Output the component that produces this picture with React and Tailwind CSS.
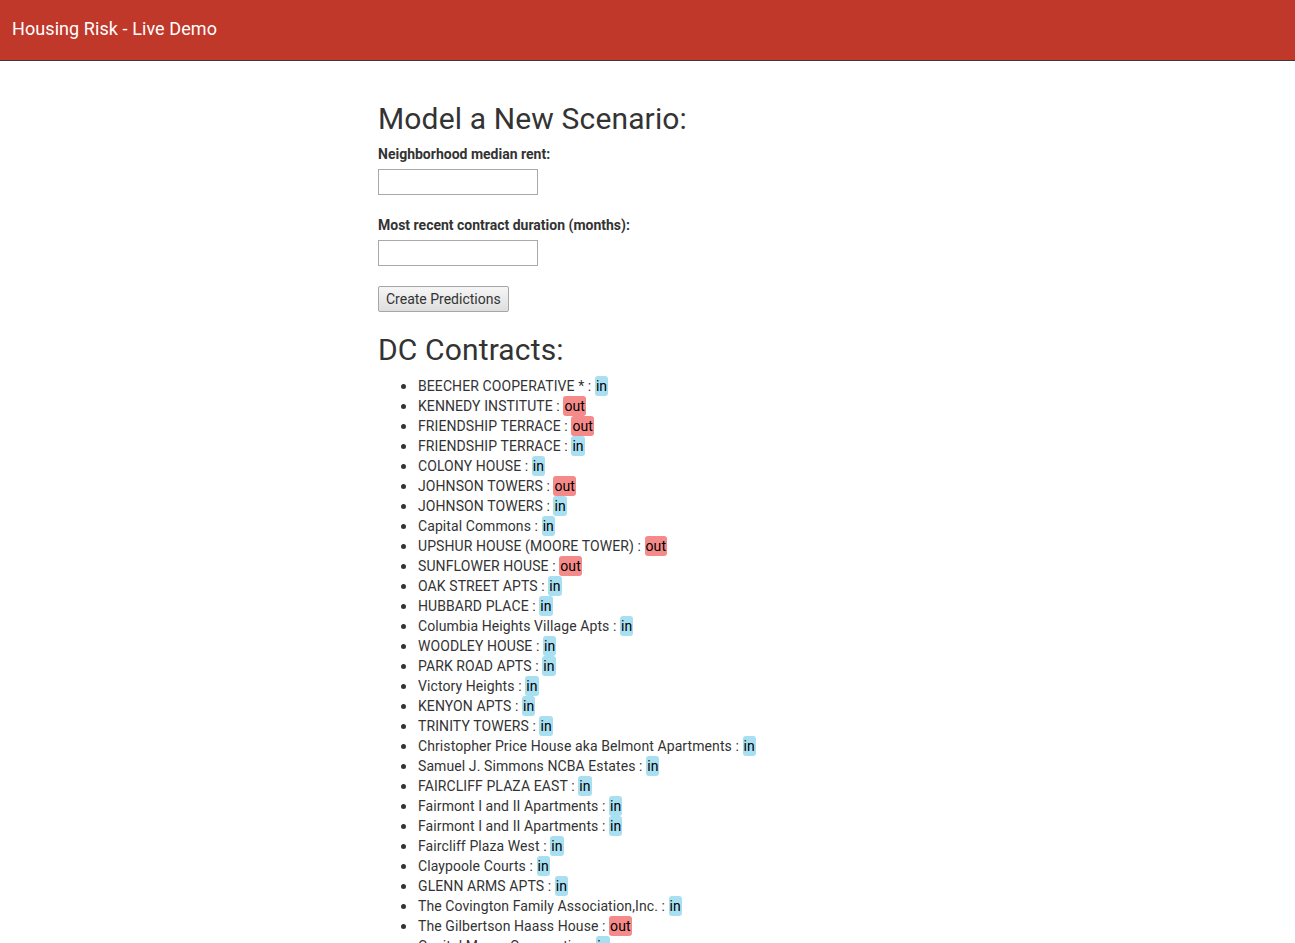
import React from "react";

const items = [
  ["BEECHER COOPERATIVE *", "in"],
  ["KENNEDY INSTITUTE", "out"],
  ["FRIENDSHIP TERRACE", "out"],
  ["FRIENDSHIP TERRACE", "in"],
  ["COLONY HOUSE", "in"],
  ["JOHNSON TOWERS", "out"],
  ["JOHNSON TOWERS", "in"],
  ["Capital Commons", "in"],
  ["UPSHUR HOUSE (MOORE TOWER)", "out"],
  ["SUNFLOWER HOUSE", "out"],
  ["OAK STREET APTS", "in"],
  ["HUBBARD PLACE", "in"],
  ["Columbia Heights Village Apts", "in"],
  ["WOODLEY HOUSE", "in"],
  ["PARK ROAD APTS", "in"],
  ["Victory Heights", "in"],
  ["KENYON APTS", "in"],
  ["TRINITY TOWERS", "in"],
  ["Christopher Price House aka Belmont Apartments", "in"],
  ["Samuel J. Simmons NCBA Estates", "in"],
  ["FAIRCLIFF PLAZA EAST", "in"],
  ["Fairmont I and II Apartments", "in"],
  ["Fairmont I and II Apartments", "in"],
  ["Faircliff Plaza West", "in"],
  ["Claypoole Courts", "in"],
  ["GLENN ARMS APTS", "in"],
  ["The Covington Family Association,Inc.", "in"],
  ["The Gilbertson Haass House", "out"],
  ["Capital Manor Cooperative", "in"],
  ["GARFIELD HILLS", "in"],
  ["PARKSIDE TERRACE", "in"],
];

function Badge({ v }) {
  return (
    <span
      className={
        "inline-block rounded-[3px] px-[1px] text-black leading-[20px] " +
        (v === "out" ? "bg-[#f58a8a]" : "bg-[#a8dff1]")
      }
    >
      {v}
    </span>
  );
}

export default function App() {
  return (
    <div
      className="min-h-screen bg-white text-[#333] text-[14px] leading-[20px]"
      style={{ fontFamily: "Roboto, 'Liberation Sans', sans-serif" }}
    >
      <header className="h-[61px] bg-[#c0382a] border-b border-[#3a3a3a] flex items-center px-[12px] pb-[2px]">
        <span className="text-white text-[18px] leading-none tracking-[0.08px]">Housing Risk - Live Demo</span>
      </header>
      <main className="pl-[378px] pt-[41px]">
        <h2 className="text-[30px] leading-[33px] font-normal m-0 tracking-[0.14px]">Model a New Scenario:</h2>
        <div className="mt-[9px] font-bold">Neighborhood median rent:</div>
        <input
          type="text"
          className="mt-[5px] block w-[160px] h-[26px] border border-[#a9a9a9] bg-white"
        />
        <div className="mt-[20px] font-bold">Most recent contract duration (months):</div>
        <input
          type="text"
          className="mt-[5px] block w-[160px] h-[26px] border border-[#a9a9a9] bg-white"
        />
        <button className="mt-[20px] h-[26px] px-[7px] border border-[#a6a6a6] rounded-[2px] bg-gradient-to-b from-[#f6f6f6] to-[#dedede] text-[#333] text-[14px]">
          Create Predictions
        </button>
        <h2 className="mt-[21px] text-[30px] leading-[33px] font-normal tracking-[0.14px]">DC Contracts:</h2>
        <ul className="mt-[9px] pl-[40px] list-disc tracking-[0.09px] marker:text-[17px] marker:text-[#333]">
          {items.map(([n, v], i) => (
            <li key={i} className="h-[20px]">
              {n} : <Badge v={v} />
            </li>
          ))}
        </ul>
      </main>
    </div>
  );
}
